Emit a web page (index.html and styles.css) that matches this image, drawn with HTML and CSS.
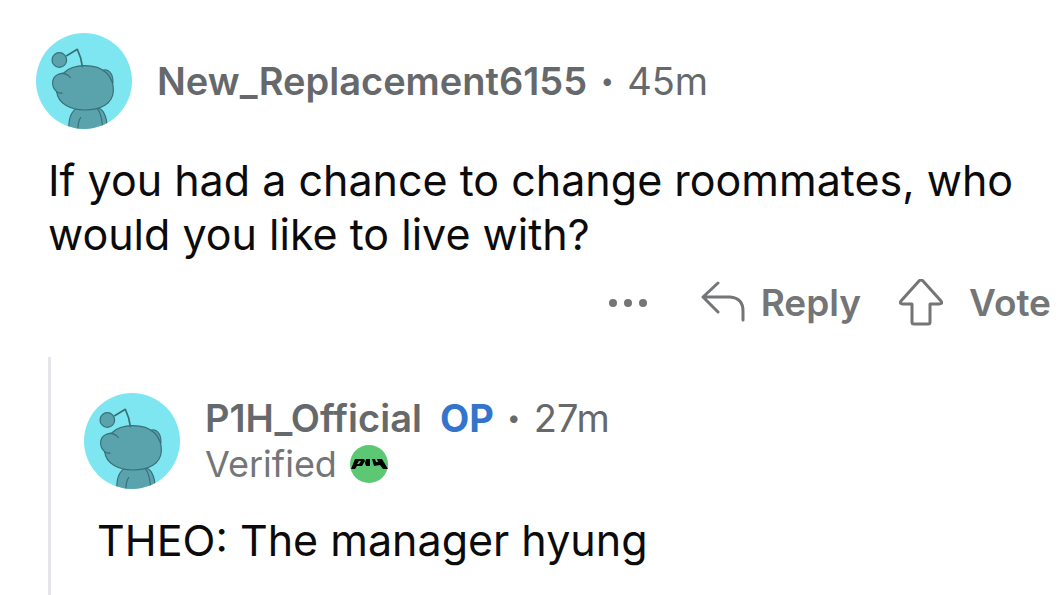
FILE: index.html
```
<!DOCTYPE html>
<html lang="en">
<head>
<meta charset="utf-8">
<title>Comments</title>
<link rel="stylesheet" href="styles.css">
</head>
<body>
<svg class="defs" aria-hidden="true">
  <symbol id="avatar" viewBox="18 14 288 288">
    <clipPath id="disc"><circle cx="162" cy="158" r="144"/></clipPath>
    <circle cx="162" cy="158" r="144" fill="#7de6f1"/>
    <g clip-path="url(#disc)" fill="#5aa3ad" stroke="#37707a" stroke-width="3.5" stroke-linecap="round" stroke-linejoin="round">
      <path d="M116 310C115 276 122 248 142 240H208C226 250 230 272 234 310Z"/>
      <path d="M144 310C143 290 145 277 152 268M202 241C214 256 216 278 220 310" fill="none"/>
      <path d="M216 127C232 119 250 132 249 164L240 160Z"/>
      <path d="M80 190C63 176 64 148 82 139C89 136 96 135 101 134C118 117 140 112 164 112C190 112 215 120 230 134C243 148 251 168 250 188C249 226 212 245 164 245C121 244 84 226 80 190Z"/>
      <path d="M98 136C108 136 116 141 121 148M79 190C86 194 91 195 97 194" fill="none"/>
      <path d="M110 82L142 63Q154 88 157 114" fill="none" stroke-width="5"/>
      <circle cx="88" cy="95" r="22"/>
    </g>
  </symbol>
</svg>
<main class="thread">
  <article class="comment">
    <header class="head">
      <svg class="avatar" role="img" aria-label="Avatar"><use href="#avatar"/></svg>
      <div class="meta"><span class="name">New_Replacement6155</span><span class="dot">•</span><time>45m</time></div>
    </header>
    <p class="text">If you had a chance to change roommates, who would you like to live with?</p>
    <div class="actions">
      <button class="action" type="button" aria-label="More">
        <svg width="38" height="48" viewBox="0 0 38 48" fill="#737577"><circle cx="4" cy="24" r="4"/><circle cx="19" cy="24" r="4"/><circle cx="34" cy="24" r="4"/></svg>
      </button>
      <button class="action reply" type="button">
        <svg class="line" width="44" height="48" viewBox="0 0 44 48"><path d="M17 4L2 18L17 33M2 18H29Q42 19 42 32V41"/></svg>
        <span>Reply</span>
      </button>
      <button class="action vote" type="button">
        <svg class="line" width="44" height="48" viewBox="0 0 44 48"><path d="M20 2Q22 0 24 2L42 22Q44 25 40 25H31V43Q31 45 29 45H15Q13 45 13 43V25H4Q0 25 2 22Z"/></svg>
        <span>Vote</span>
      </button>
    </div>
  </article>
  <article class="comment child">
    <header class="head">
      <svg class="avatar" role="img" aria-label="Avatar"><use href="#avatar"/></svg>
      <div>
        <div class="meta"><span class="name">P1H_Official</span><span class="op">OP</span><span class="dot">•</span><time>27m</time></div>
        <div class="flair">Verified
          <svg width="38" height="38" viewBox="0 0 38 38" role="img" aria-label="P1H"><circle cx="19" cy="19" r="19" fill="#5cc873"/><path d="M5 14H14L15 16L12 21H7L5 24H1ZM16 14H20V21H16L15 18ZM22 14H25L26 17H28L27 14H32L38 24H33L30 20L24 21Z" fill="#000"/><path d="M9 16L7 19H9L11 16Z" fill="#5cc873"/></svg>
        </div>
      </div>
    </header>
    <p class="text">THEO: The manager hyung</p>
  </article>
</main>
</body>
</html>
```
FILE: styles.css
```
body {
  margin: 0;
  background: #fff;
  color: #0b0b0c;
  font-family: Inter, "Liberation Sans", sans-serif;
}

.defs {
  position: absolute;
  width: 0;
  height: 0;
}

.thread {
  padding-top: 33px;
}

.head {
  display: flex;
  align-items: center;
  gap: 25px;
  padding-left: 36px;
}

.avatar {
  flex: none;
  width: 96px;
  height: 96px;
}

.meta {
  display: flex;
  align-items: center;
  color: #66696b;
  font-size: 38px;
  line-height: 46px;
}

.name {
  font-weight: 600;
}

.op {
  margin-left: 18px;
  color: #3375cc;
  font-weight: 700;
}

.dot {
  width: 40px;
  font-size: 24px;
  text-align: center;
}

.text {
  margin: 24px 24px 0 48px;
  font-size: 43px;
  line-height: 54px;
}

.actions {
  display: flex;
  justify-content: flex-end;
  padding: 18px 8px 0 0;
}

.action {
  display: flex;
  align-items: center;
  gap: 16px;
  padding: 0;
  border: 0;
  background: none;
  color: #737577;
  font: 600 37px/48px Inter, "Liberation Sans", sans-serif;
}

.reply {
  margin-left: 54px;
}

.vote {
  gap: 26px;
  margin-left: 38px;
}

.line {
  fill: none;
  stroke: #737577;
  stroke-width: 3;
  stroke-linecap: round;
  stroke-linejoin: round;
}

.child {
  margin: 30px 0 0 48px;
  padding: 36px 0 28px;
  border-left: 3px solid #e6e6ea;
}

.child .head {
  padding-left: 33px;
}

.child .text {
  margin-left: 46px;
}

.flair {
  display: flex;
  align-items: center;
  gap: 13px;
  color: #737577;
  font-size: 36px;
  line-height: 46px;
}
```
